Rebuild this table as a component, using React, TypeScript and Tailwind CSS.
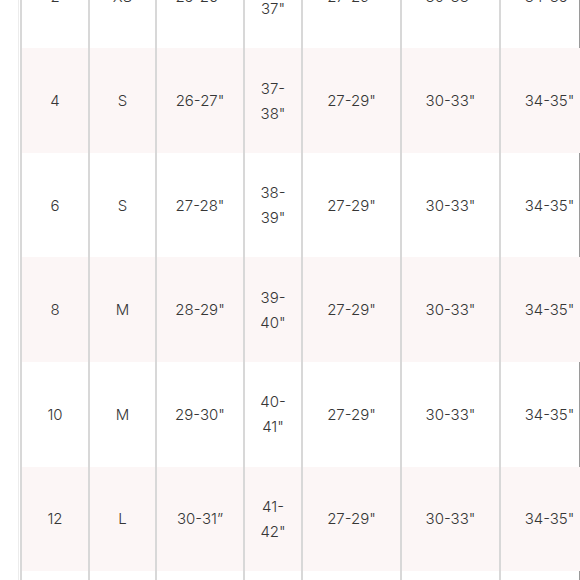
import clsx from 'clsx';

type SizeRow = {
  us: string;
  letter: string;
  waist: string;
  bust: string;
  inseam: string;
  rise: string;
  hip: string;
};

const rows: SizeRow[] = [
  { us: '2', letter: 'XS', waist: '25-26"', bust: '36-37"', inseam: '27-29"', rise: '30-33"', hip: '34-35"' },
  { us: '4', letter: 'S', waist: '26-27"', bust: '37-38"', inseam: '27-29"', rise: '30-33"', hip: '34-35"' },
  { us: '6', letter: 'S', waist: '27-28"', bust: '38-39"', inseam: '27-29"', rise: '30-33"', hip: '34-35"' },
  { us: '8', letter: 'M', waist: '28-29"', bust: '39-40"', inseam: '27-29"', rise: '30-33"', hip: '34-35"' },
  { us: '10', letter: 'M', waist: '29-30"', bust: '40-41"', inseam: '27-29"', rise: '30-33"', hip: '34-35"' },
  { us: '12', letter: 'L', waist: '30-31”', bust: '41-42"', inseam: '27-29"', rise: '30-33"', hip: '34-35"' },
  { us: '14', letter: 'L', waist: '31-32"', bust: '42-43"', inseam: '27-29"', rise: '30-33"', hip: '34-35"' },
];

const columns: Array<{ key: keyof SizeRow; className: string }> = [
  { key: 'us', className: 'w-[68px]' },
  { key: 'letter', className: 'w-[67px]' },
  { key: 'waist', className: 'w-[88px]' },
  { key: 'bust', className: 'w-[58px] px-[9px]' },
  { key: 'inseam', className: 'w-[99px]' },
  { key: 'rise', className: 'w-[99px]' },
  { key: 'hip', className: 'w-[99px]' },
];

export default function App() {
  return (
    <div
      className="flex h-[580px] w-[580px] overflow-hidden bg-white text-[15px] leading-[25px] font-light text-[#363636]"
      style={{ fontFamily: 'Inter, "Open Sans", sans-serif' }}
    >
      <div className="w-[18px] shrink-0 bg-white" />
      <div className="w-px shrink-0 bg-[#ececec]" />
      <div className="w-px shrink-0 bg-white" />
      {/* table is wider than the window, its last column runs past the edge */}
      <div className="-mt-[56.3px] flex min-w-0 flex-1 flex-col overflow-hidden">
        {rows.map((row, rowIndex) => {
          const isPink = rowIndex % 2 === 1;
          return (
            <div
              key={row.us}
              className={clsx(
                'flex h-[104.6px] shrink-0',
                isPink ? 'bg-[#fcf6f6]' : 'bg-white shadow-[inset_-1px_0_0_#9a9a9a]',
              )}
            >
              {columns.map((column) => (
                <div
                  key={column.key}
                  className={clsx(
                    'flex shrink-0 items-center justify-center border-l-2 border-[#d8d8d8] text-center',
                    column.className,
                  )}
                >
                  <span>{row[column.key]}</span>
                </div>
              ))}
            </div>
          );
        })}
      </div>
    </div>
  );
}
